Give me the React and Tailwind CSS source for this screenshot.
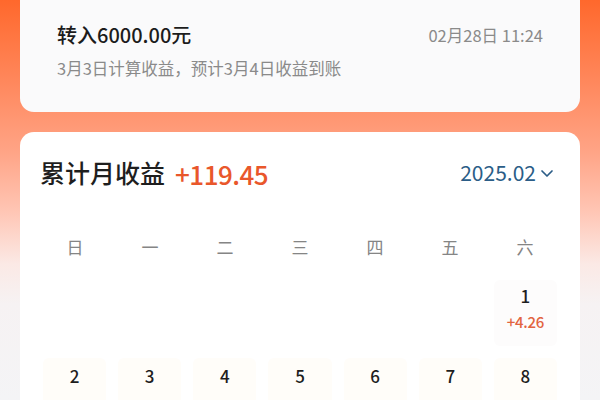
import React from "react";

const font = { fontFamily: '"Noto Sans CJK SC", "Noto Sans", sans-serif' };

export default function App() {
  const week = ["日", "一", "二", "三", "四", "五", "六"];
  const row2 = ["2", "3", "4", "5", "6", "7", "8"];
  return (
    <div
      className="w-[600px] h-[400px] overflow-hidden bg-[linear-gradient(180deg,#ff682c_0%,#ff8a60_22%,#ffa486_38%,#ffc6b5_53%,#fbe9e5_66%,#f6f2f3_76%,#f4f4f6_100%)]"
      style={font}
    >
      <div className="px-5">
        <div className="h-[112px] rounded-b-[14px] bg-[#fafafb] pl-[37px] pr-[37px] flex flex-col">
          <div className="flex items-center justify-between mt-[20px] h-[30px]">
            <span className="text-[20px] font-medium text-[#1c1c1c]">转入6000.00元</span>
            <span className="text-[16.5px] text-[#8a8a8a]">02月28日 11:24</span>
          </div>
          <div className="mt-[6px] text-[16.5px] text-[#8a8a8a]">3月3日计算收益，预计3月4日收益到账</div>
        </div>
        <div className="mt-[20px] h-[300px] rounded-[14px] bg-white">
          <div className="flex items-center h-[82px] pl-5 pr-[25px]">
            <span className="text-[25px] font-medium text-[#1e1e1e]">累计月收益</span>
            <span className="ml-[10px] text-[26px] font-medium text-[#e9572b] tracking-[-0.5px]">+119.45</span>
            <span className="ml-auto text-[21px] text-[#2b5d87] flex items-center gap-[3px]">
              2025.02
              <svg width="16" height="16" viewBox="0 0 16 16" fill="none" stroke="#2b5d87" strokeWidth="1.7" strokeLinecap="round" strokeLinejoin="round">
                <path d="M3 6 L8 11 L13 6" />
              </svg>
            </span>
          </div>
          <div className="grid grid-cols-7 px-[17.5px] h-[66px] items-center">
            {week.map((w) => (
              <div key={w} className="text-center text-[17px] text-[#858585]">{w}</div>
            ))}
          </div>
          <div className="grid grid-cols-7 gap-x-[12px] px-[23px]">
            {week.map((w, i) => (
              <div key={w} className={"h-[66px] rounded-[6px] flex flex-col items-center " + (i === 6 ? "bg-[#fdfcfc]" : "")}>
                {i === 6 && (
                  <>
                    <span className="mt-[4px] text-[17px] font-medium text-[#1e1e1e] leading-[24px]">1</span>
                    <span className="mt-[4px] text-[15px] font-medium text-[#e2643f] leading-[20px] tracking-[-0.3px]">+4.26</span>
                  </>
                )}
              </div>
            ))}
          </div>
          <div className="grid grid-cols-7 gap-x-[12px] px-[23px] mt-[12px]">
            {row2.map((d) => (
              <div key={d} className="h-[66px] rounded-[6px] bg-[#fffdf9] flex flex-col items-center">
                <span className="mt-[6px] text-[17px] font-medium text-[#1e1e1e] leading-[24px]">{d}</span>
              </div>
            ))}
          </div>
        </div>
      </div>
    </div>
  );
}
